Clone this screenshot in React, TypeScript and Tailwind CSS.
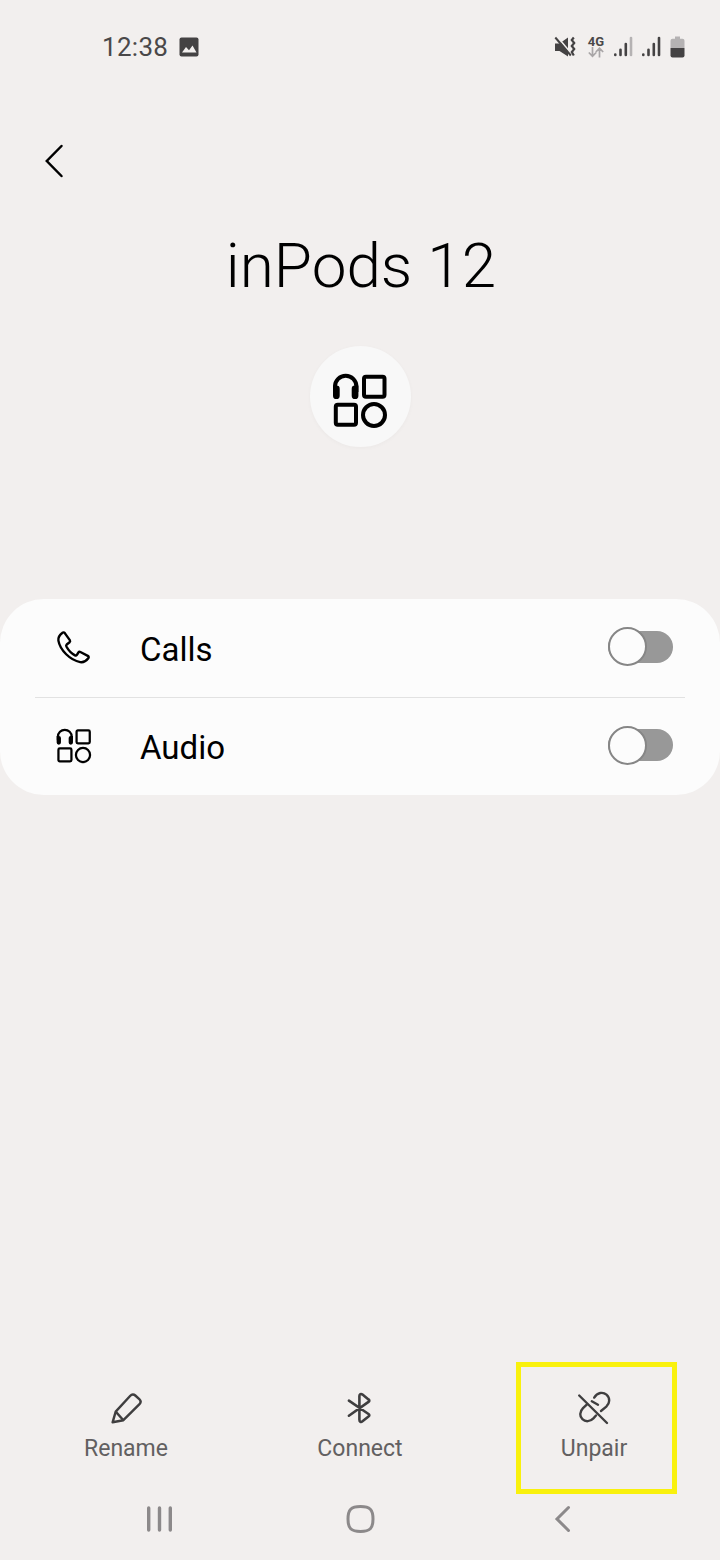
import { useState } from 'react'
import type { ReactNode } from 'react'

function MediaDevicesIcon({ className, thin }: { className?: string; thin?: boolean }) {
  const stroke = thin ? 3.5 : 4
  return (
    <svg viewBox="0 0 56 56" fill="none" stroke="#000" strokeWidth={stroke} className={className}>
      <path d="M3 19v-5.5a10.6 10.6 0 0 1 21.4 0V19" />
      <path
        d="M1 12.5h3.5a3.2 3.2 0 0 1 3.2 3.2v7a3.3 3.3 0 0 1-6.7 0zM26.4 12.5h-3.5a3.2 3.2 0 0 0-3.2 3.2v7a3.3 3.3 0 0 0 6.7 0z"
        fill="#000"
        stroke="none"
      />
      <rect x="32" y="3.8" width="20.5" height="20" rx="2" />
      <rect x="3.8" y="31.8" width="20.2" height="20" rx="2" />
      <circle cx="42" cy="42" r="11" />
    </svg>
  )
}

function PhoneIcon() {
  return (
    <svg viewBox="0 0 36 36" fill="none" stroke="#000" strokeWidth="2.4" strokeLinejoin="round" className="size-9">
      <path d="M6.2 3c.9-.8 1.9-.8 2.6.1l5 7c.5.8.4 1.5-.2 2.1l-2.9 2.3c-.6.6-.7 1.2-.3 2 2.1 3.900 4.900 6.900 8.600 8.900.8.4 1.4.2 1.9-.5l1.5-2.4c.5-.7 1.200-.9 2-.5l7.400 3.900c1 .6 1.200 1.500.5 2.300-2 2.600-4.900 4.500-8.100 3.900C14.200 30.200 4.100 20.200 2.400 10.600 1.900 7.500 3.900 4.800 6.200 3z" />
    </svg>
  )
}

function PencilIcon() {
  return (
    <svg viewBox="0 0 36 36" fill="none" stroke="#3f3e3f" strokeWidth="2.4" strokeLinejoin="round" className="size-9">
      <path d="M7.7 21.6 22.3 5.7c1.5-1.6 3.4-1.7 5-.2l4 3.7c1.6 1.5 1.7 3.4.2 5L15.4 30.2 4.6 32.3z" />
      <path d="m7.7 21.6 7.7 8.600" />
    </svg>
  )
}

function BluetoothIcon() {
  return (
    <svg
      viewBox="0 0 36 36"
      fill="none"
      stroke="#3f3e3f"
      strokeWidth="2.6"
      strokeLinecap="round"
      strokeLinejoin="round"
      className="size-9"
    >
      <path d="M6.900 10.700 26.500 24c1.100.8 1.100 1.700 0 2.500l-6 4.800c-1.600 1.200-3.100.4-3.100-1.500V6.100c0-1.900 1.500-2.700 3.100-1.500l6 4.800c1.100.8 1.100 1.700 0 2.500L6.900 25.700" />
    </svg>
  )
}

function UnlinkIcon() {
  return (
    <svg viewBox="0 0 36 36" fill="none" stroke="#3f3e3f" strokeWidth="2.4" strokeLinecap="round" className="size-9">
      <path d="M3.2 5.500 31 33" />
      <path d="M18.200 7.600c3.200-5.300 8.800-6 12.300-2.900 3.800 3.400 3.400 8.600-.2 12l-5.300 4.300" />
      <path d="m15.800 11.300 6.200 3.400" />
      <path d="m11 14.300-4 3.900c-3.500 3.600-3.600 8.200-.6 11 3.100 2.900 7.700 2.600 11-.8l2.600-2.900" />
    </svg>
  )
}

function SignalIcon({ weak }: { weak?: boolean }) {
  return (
    <svg viewBox="0 0 20 22" strokeWidth="2.6" strokeLinecap="round" stroke="#444243" className="h-[22px] w-5">
      <path d="M2.300 18.500v.4M7.500 13.800v5.100M12.800 8v10.900" />
      <path d="M18 2v16.900" stroke={weak ? '#b5b2b3' : '#444243'} />
    </svg>
  )
}

function StatusBar() {
  return (
    <header className="flex h-[94px] shrink-0 items-center justify-between pr-[35px] pl-[102px] text-[#4a4849]">
      <div className="flex items-center gap-[11px]">
        <span className="text-[26px] leading-8 tracking-[0.3px]">12:38</span>
        <svg viewBox="0 0 20 20" className="size-5">
          <rect x="0.5" y="0.5" width="19" height="19" rx="2" fill="#444243" />
          <path d="M3 15.500 7 10l3 3.300 3.500-4.800 4 7z" fill="#f2efee" />
        </svg>
      </div>
      <div className="flex items-center">
        <svg viewBox="0 0 22 22" className="size-[22px]">
          <path d="M1 7.500h4.500L14 1.500v19L5.500 15H1z" fill="#444243" />
          <path d="m2.500 0 16 19" stroke="#f2efee" strokeWidth="1.8" />
          <path d="m1.300 1.500 15.500 18" stroke="#444243" strokeWidth="2" />
          <path
            d="M19.800 1.500 17.800 4l2.400 3-2.400 3 2.400 3-2.400 3 2 3.500"
            fill="none"
            stroke="#444243"
            strokeWidth="2.2"
          />
        </svg>
        <div className="ml-[11px] flex w-[18px] flex-col items-center">
          <span className="text-[13px] leading-[11px] font-bold">4G</span>
          <svg viewBox="0 0 16 11" fill="none" stroke="#a9a6a7" strokeWidth="1.7" className="h-[11px] w-4">
            <path d="M4.500 0v9M.8 5.500l3.700 3.700 3.700-3.700M11.500 10.500v-9M7.800 5l3.700-3.700L15.200 5" />
          </svg>
        </div>
        <div className="ml-2 flex gap-2">
          <SignalIcon weak />
          <SignalIcon />
        </div>
        <svg viewBox="0 0 15 22" className="ml-[9px] h-[22px] w-[15px]">
          <path d="M5 .5h5v2.200h2.500a2 2 0 0 1 2 2V12H.5V4.700a2 2 0 0 1 2-2H5z" fill="#b5b2b3" />
          <path d="M.5 12h14v7.500a2 2 0 0 1-2 2h-10a2 2 0 0 1-2-2z" fill="#444243" />
        </svg>
      </div>
    </header>
  )
}

function ProfileRow({ icon, label }: { icon: ReactNode; label: string }) {
  const [on, setOn] = useState(false)

  return (
    <div className="flex h-full items-center pr-3 pl-[21px]">
      {icon}
      <span className="ml-12 flex-1 pt-[3px] text-[33px] leading-10 text-black">{label}</span>
      <button
        role="switch"
        aria-checked={on}
        aria-label={label}
        onClick={() => setOn(!on)}
        className="mb-[3px] flex h-10 w-[65px] items-center"
      >
        <span className="flex h-8 w-full items-center rounded-full bg-[#989898]">
          <span
            className={
              on
                ? 'ml-auto size-[39px] shrink-0 rounded-full border-2 border-[#868686] bg-[#fcfcfc]'
                : 'size-[39px] shrink-0 rounded-full border-2 border-[#868686] bg-[#fcfcfc]'
            }
          />
        </span>
      </button>
    </div>
  )
}

function Action({ icon, label }: { icon: ReactNode; label: string }) {
  return (
    <button className="flex h-full w-full flex-col items-center text-[#626061]">
      {icon}
      <span className="mt-[9px] text-[23px] leading-7">{label}</span>
    </button>
  )
}

export default function App() {
  return (
    <div className="flex h-[1560px] w-[720px] flex-col bg-[#f2efee] font-[Roboto,sans-serif]">
      <StatusBar />

      <div className="flex h-[134px] shrink-0 items-center pl-[43px]">
        <button aria-label="Back">
          <svg viewBox="0 0 22 36" fill="none" stroke="#000" strokeWidth="2.5" strokeLinecap="round" className="h-9 w-[22px]">
            <path d="M18.500 3 3.800 18l14.700 15" />
          </svg>
        </button>
      </div>

      <div className="flex h-[371px] shrink-0 flex-col items-center">
        <h1 className="pl-0.5 text-[62px] leading-[76px] font-light text-black">inPods 12</h1>
        <div className="mt-[42px] flex size-[101px] items-center justify-center rounded-full bg-[#f8f8f8] shadow-[0_1px_4px_rgba(0,0,0,0.03)]">
          <MediaDevicesIcon className="mt-[9px] size-14" />
        </div>
      </div>

      <section className="shrink-0 rounded-[44px] bg-[#fcfcfc] px-[35px]">
        <div className="h-[98px]">
          <ProfileRow icon={<PhoneIcon />} label="Calls" />
        </div>
        <div className="h-px bg-[#e2e2e2]" />
        <div className="h-[97px]">
          <ProfileRow icon={<MediaDevicesIcon thin className="mb-0.5 size-9" />} label="Audio" />
        </div>
      </section>

      {/* Bottom actions */}
      <div className="mt-auto flex h-[132px] shrink-0 pr-[43px] pl-[46px]">
        <div className="w-40 pt-7">
          <Action icon={<PencilIcon />} label="Rename" />
        </div>
        <div className="ml-[74px] w-40 pt-7">
          <Action icon={<BluetoothIcon />} label="Connect" />
        </div>
        <div className="ml-auto w-[161px] border-5 border-[#f9f10d] pt-[23px] pr-[5px]">
          <Action icon={<UnlinkIcon />} label="Unpair" />
        </div>
      </div>

      {/* System navigation */}
      <nav className="flex h-[66px] shrink-0 items-center pb-[17px] pl-[145px]">
        <svg viewBox="0 0 30 30" stroke="#8c898a" strokeWidth="3.4" strokeLinecap="round" className="size-[30px]">
          <path d="M3.700 4v22M14.500 4v22M25.300 4v22" />
        </svg>
        <svg viewBox="0 0 30 30" fill="none" stroke="#8c898a" strokeWidth="3" className="ml-[171px] size-[30px]">
          <path d="M14.500 2.500c9.500 0 12.500 3 12.500 12.500s-3 12.500-12.500 12.500S2 24.500 2 15 5 2.500 14.500 2.500z" />
        </svg>
        <svg viewBox="0 0 20 30" fill="none" stroke="#8c898a" strokeWidth="3" strokeLinecap="round" className="ml-[177px] h-[30px] w-5">
          <path d="M15.500 3.500 4 15l11.500 11.500" />
        </svg>
      </nav>
    </div>
  )
}
